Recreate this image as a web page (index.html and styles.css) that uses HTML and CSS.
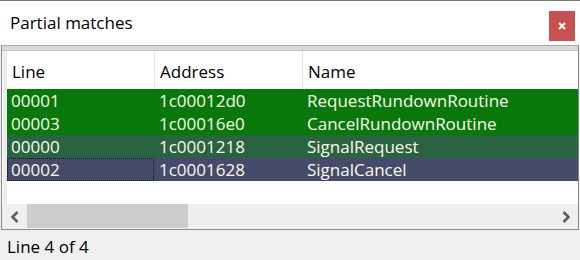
FILE: index.html
```html
<!DOCTYPE html>
<html>
<head>
<meta charset="utf-8">
<link rel="stylesheet" href="styles.css">
</head>
<body>
<div class="window">
  <div class="titlebar">
    <span class="title">Partial matches</span>
    <div class="close">
      <svg width="8" height="8" viewBox="0 0 8 8"><path d="M1 1 L7 7 M7 1 L1 7" stroke="#fff" stroke-width="2" fill="none"/></svg>
    </div>
  </div>
  <div class="list">
    <div class="band"></div>
    <div class="content">
      <div class="gutter"></div>
      <div class="table">
        <div class="row header">
          <div class="cell c1">Line</div>
          <div class="cell c2">Address</div>
          <div class="cell c3">Name</div>
        </div>
        <div class="row item green">
          <div class="cell c1">00001</div>
          <div class="cell c2">1c00012d0</div>
          <div class="cell c3">RequestRundownRoutine</div>
        </div>
        <div class="row item green">
          <div class="cell c1">00003</div>
          <div class="cell c2">1c00016e0</div>
          <div class="cell c3">CancelRundownRoutine</div>
        </div>
        <div class="row item dkgreen">
          <div class="cell c1">00000</div>
          <div class="cell c2">1c0001218</div>
          <div class="cell c3">SignalRequest</div>
        </div>
        <div class="row item slate">
          <div class="cell c1 focus">00002</div>
          <div class="cell c2">1c0001628</div>
          <div class="cell c3">SignalCancel</div>
        </div>
      </div>
    </div>
    <div class="hscroll">
      <div class="sbtn">
        <svg width="10" height="12" viewBox="0 0 10 12"><path d="M7.5 1 L2.5 6 L7.5 11" stroke="#606060" stroke-width="2.6" fill="none"/></svg>
      </div>
      <div class="thumb"></div>
      <div class="track"></div>
      <div class="sbtn">
        <svg width="10" height="12" viewBox="0 0 10 12"><path d="M2.5 1 L7.5 6 L2.5 11" stroke="#606060" stroke-width="2.6" fill="none"/></svg>
      </div>
    </div>
  </div>
  <div class="status">Line 4 of 4</div>
</div>
</body>
</html>
```
FILE: styles.css
```css
html, body {
  margin: 0;
  padding: 0;
}
body {
  width: 580px;
  height: 260px;
  overflow: hidden;
  background: #f0f0f0;
  font-family: "Open Sans", "Noto Sans", sans-serif;
  font-size: 17px;
  line-height: 23px;
}
.window {
  display: flex;
  flex-direction: column;
  width: 580px;
  height: 260px;
}
.titlebar {
  border-top: 1px solid #7a7a7a;
  height: 44px;
  background: #fff;
  display: flex;
  align-items: flex-start;
  justify-content: space-between;
  box-sizing: border-box;
  height: 45px;
}
.title {
  margin: 10px 0 0 10px;
  color: #000;
}
.close {
  width: 26px;
  height: 30px;
  margin: 10px 5px 0 0;
  background: #c75050;
  display: flex;
  align-items: center;
  justify-content: center;
}
.close svg {
  display: block;
}
.list {
  margin-left: 1px;
  width: 578px;
  box-sizing: border-box;
  border: 1px solid #8a8a8a;
  border-top-color: #a8a8a8;
  background: #fff;
  display: flex;
  flex-direction: column;
}
.band {
  height: 4px;
  background: #dadada;
  border-bottom: 1px solid #c6c6c6;
}
.content {
  display: flex;
  height: 153px;
  padding-left: 1px;
}
.gutter {
  width: 4px;
  background: #ececec;
}
.table {
  flex: 1;
  display: flex;
  flex-direction: column;
}
.row {
  display: flex;
  height: 23px;
}
.row.header {
  height: 38px;
  box-sizing: border-box;
  padding-top: 9px;
  color: #000;
}
.cell {
  box-sizing: border-box;
  padding-left: 4px;
  white-space: nowrap;
}
.c1 { width: 148px; }
.c2 { width: 148px; }
.c3 { flex: 1; }
.header .cell {
  padding-left: 5px;
  border-right: 1px solid #e5e5e5;
  margin-top: -9px;
  padding-top: 9px;
}
.header .c3 {
  border-right: none;
}
.item {
  color: #fbfbe8;
}
.green { background: #08780a; }
.dkgreen { background: #2a6341; }
.slate { background: #464a6b; }
.focus {
  outline: 1px dotted #111;
  outline-offset: -1px;
  width: 147px;
  margin-right: 1px;
}
.hscroll {
  height: 25px;
  background: #efefef;
  display: flex;
  align-items: stretch;
  padding-left: 1px;
}
.sbtn {
  width: 24px;
  display: flex;
  align-items: center;
  justify-content: center;
}
.thumb {
  width: 161px;
  background: #cdcdcd;
  margin-top: 0;
  margin-bottom: 1px;
}
.track {
  flex: 1;
}
.status {
  padding: 5px 0 0 7px;
  color: #000;
}
```
